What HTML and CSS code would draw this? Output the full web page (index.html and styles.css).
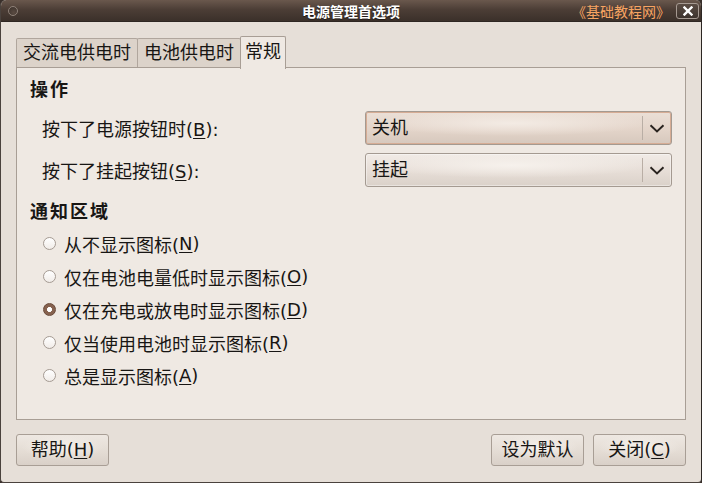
FILE: index.html
```html
<!DOCTYPE html>
<html lang="zh-CN">
<head>
    <meta charset="UTF-8">
    <title>电源管理首选项</title>
    <link rel="stylesheet" href="styles.css">
</head>
<body>
    <div class="window">
        <div class="titlebar">
            <div class="tb-left"><span class="tb-dot"></span></div>
            <div class="tb-title">电源管理首选项</div>
            <div class="tb-right">
                <span class="tb-brand">《基础教程网》</span>
                <span class="tb-close">
                    <svg width="10" height="10" viewBox="0 0 10 10"><path d="M1.5 1.5 L8.5 8.5 M8.5 1.5 L1.5 8.5" stroke="#fff" stroke-width="2.4" stroke-linecap="square"/></svg>
                </span>
            </div>
        </div>

        <div class="content">
            <ul class="tabs">
                <li>交流电供电时</li>
                <li>电池供电时</li>
                <li class="selected">常规</li>
            </ul>
            <div class="panel">
                <h3 class="section">操作</h3>
                <div class="action-row">
                    <span class="label">按下了电源按钮时(<u>B</u>):</span>
                    <div class="combo focus">
                        <span class="combo-text">关机</span>
                        <span class="combo-arrow">
                            <svg width="16" height="9" viewBox="0 0 16 9"><path d="M1.5 1.3 L8 7.4 L14.5 1.3" fill="none" stroke="#2a2420" stroke-width="2"/></svg>
                        </span>
                    </div>
                </div>
                <div class="action-row">
                    <span class="label">按下了挂起按钮(<u>S</u>):</span>
                    <div class="combo">
                        <span class="combo-text">挂起</span>
                        <span class="combo-arrow">
                            <svg width="16" height="9" viewBox="0 0 16 9"><path d="M1.5 1.3 L8 7.4 L14.5 1.3" fill="none" stroke="#2a2420" stroke-width="2"/></svg>
                        </span>
                    </div>
                </div>

                <h3 class="section second">通知区域</h3>
                <ul class="radios">
                    <li><span class="radio"></span>从不显示图标(<u>N</u>)</li>
                    <li><span class="radio"></span>仅在电池电量低时显示图标(<u>O</u>)</li>
                    <li><span class="radio checked"></span>仅在充电或放电时显示图标(<u>D</u>)</li>
                    <li><span class="radio"></span>仅当使用电池时显示图标(<u>R</u>)</li>
                    <li><span class="radio"></span>总是显示图标(<u>A</u>)</li>
                </ul>
            </div>

            <div class="buttons">
                <span class="btn">帮助(<u>H</u>)</span>
                <span class="spacer"></span>
                <span class="btn">设为默认</span>
                <span class="btn">关闭(<u>C</u>)</span>
            </div>
        </div>
    </div>
</body>
</html>
```

FILE: styles.css
```css
*{
    margin: 0;
    padding: 0;
    box-sizing: border-box;
}
ul{
    list-style: none;
}
html, body{
    width: 702px;
    height: 483px;
    overflow: hidden;
    background: #3a302b;
}
body{
    font-family: "DejaVu Sans", "Noto Sans CJK SC", sans-serif;
    font-size: 18px;
    color: #181614;
}
u{
    text-decoration: underline;
    text-underline-offset: 2px;
}
.window{
    width: 702px;
    height: 483px;
    background: #e6dfd8;
    border: 1px solid #4a423d;
    border-top: none;
    border-right-color: #2c2623;
    border-radius: 6px 6px 4px 4px;
    overflow: hidden;
    display: flex;
    flex-direction: column;
}
/* title bar */
.titlebar{
    height: 22px;
    flex: none;
    margin: 0 -1px;
    display: grid;
    grid-template-columns: 1fr auto 1fr;
    align-items: center;
    background: linear-gradient(#6a584d, #4c3e36 45%, #3b302a);
    border-bottom: 1px solid #2e2622;
    border-radius: 6px 6px 0 0;
}
.tb-left{
    padding-left: 8px;
    display: flex;
}
.tb-dot{
    width: 10px;
    height: 10px;
    border-radius: 50%;
    border: 1px solid #8f8279;
    background: radial-gradient(circle at 60% 70%, #5a4b42, #3a302a);
}
.tb-title{
    font-family: "Noto Sans CJK SC", sans-serif;
    font-size: 14px;
    font-weight: bold;
    color: #fff;
    text-shadow: 0 1px 1px #1e1815;
    line-height: 22px;
}
.tb-right{
    display: flex;
    justify-content: flex-end;
    align-items: center;
    padding-right: 3px;
}
.tb-brand{
    font-family: "Noto Sans CJK SC", sans-serif;
    font-size: 14px;
    color: #f7a462;
    margin-right: 6px;
    line-height: 22px;
}
.tb-close{
    width: 23px;
    height: 16px;
    border: 1px solid #a69a92;
    border-radius: 3px;
    background: linear-gradient(#5a4c43, #3e342e);
    display: flex;
    align-items: center;
    justify-content: center;
}
/* body */
.content{
    flex: 1;
    padding: 14px 15px 0 15px;
    display: flex;
    flex-direction: column;
}
.tabs{
    display: flex;
    align-items: flex-end;
    height: 31px;
    position: relative;
    z-index: 1;
}
.tabs li{
    height: 29px;
    line-height: 27px;
    padding: 0 6px;
    background: #dcd3ca;
    border: 1px solid #b0a69d;
    border-bottom: none;
    border-radius: 2px 2px 0 0;
    margin-right: -1px;
}
.tabs li.selected{
    height: 33px;
    line-height: 30px;
    margin-bottom: -2px;
    background: #efe9e3;
    border-color: #a89e95;
    padding: 0 4px;
}
.panel{
    height: 353px;
    background: #efe9e3;
    border: 1px solid #a89e95;
    padding: 10px 13px 0 13px;
}
.section{
    font-size: 18px;
    font-weight: bold;
    letter-spacing: 2px;
    line-height: 24px;
}
.section.second{
    margin-top: 13px;
}
.action-row{
    display: grid;
    grid-template-columns: 1fr 307px;
    align-items: center;
    margin-top: 9px;
}
.action-row + .action-row{
    margin-top: 8px;
}
.label{
    padding-left: 12px;
}
.combo{
    height: 34px;
    display: flex;
    align-items: stretch;
    border: 1px solid #a49a91;
    border-radius: 3px;
    background: radial-gradient(ellipse 45% 40% at 48% 35%, #f6f1ec, rgba(246,241,236,0) 100%),
                linear-gradient(#f1ebe6, #e6ddd6 55%, #dad1c9);
    box-shadow: inset 0 0 0 1px rgba(255,255,255,0.4);
}
.combo.focus{
    box-shadow: inset 0 0 0 1px #d6ac94;
    background: radial-gradient(ellipse 45% 40% at 48% 35%, #f3ebe4, rgba(243,235,228,0) 100%),
                linear-gradient(#ebdfd6, #e3d4c9 55%, #d6c8bd);
}
.combo-text{
    flex: 1;
    padding-left: 6px;
    line-height: 32px;
}
.combo-arrow{
    width: 29px;
    margin: 4px 0;
    border-left: 1px solid #b9aea5;
    display: flex;
    align-items: center;
    justify-content: center;
}
.radios{
    margin-top: 3px;
}
.radios li{
    height: 33px;
    display: flex;
    align-items: center;
    padding-left: 13px;
}
.radio{
    width: 13px;
    height: 13px;
    border-radius: 50%;
    border: 1px solid #a59b93;
    background: linear-gradient(#ffffff, #f1ece8);
    margin-right: 8px;
    flex: none;
}
.radio.checked{
    border: 1px solid #6a4a3a;
    background: radial-gradient(circle, #ffffff 0 2.2px, #86624f 2.8px 100%);
}
/* buttons */
.buttons{
    display: flex;
    gap: 9px;
    margin-top: 14px;
}
.spacer{
    flex: 1;
}
.btn{
    width: 93px;
    height: 32px;
    line-height: 30px;
    text-align: center;
    border: 1px solid #a89e95;
    border-radius: 3px;
    background: radial-gradient(ellipse 45% 40% at 50% 40%, #f5f0eb, rgba(245,240,235,0) 100%),
                linear-gradient(#eee8e2, #e3dbd3 60%, #d9d0c8);
}
```
